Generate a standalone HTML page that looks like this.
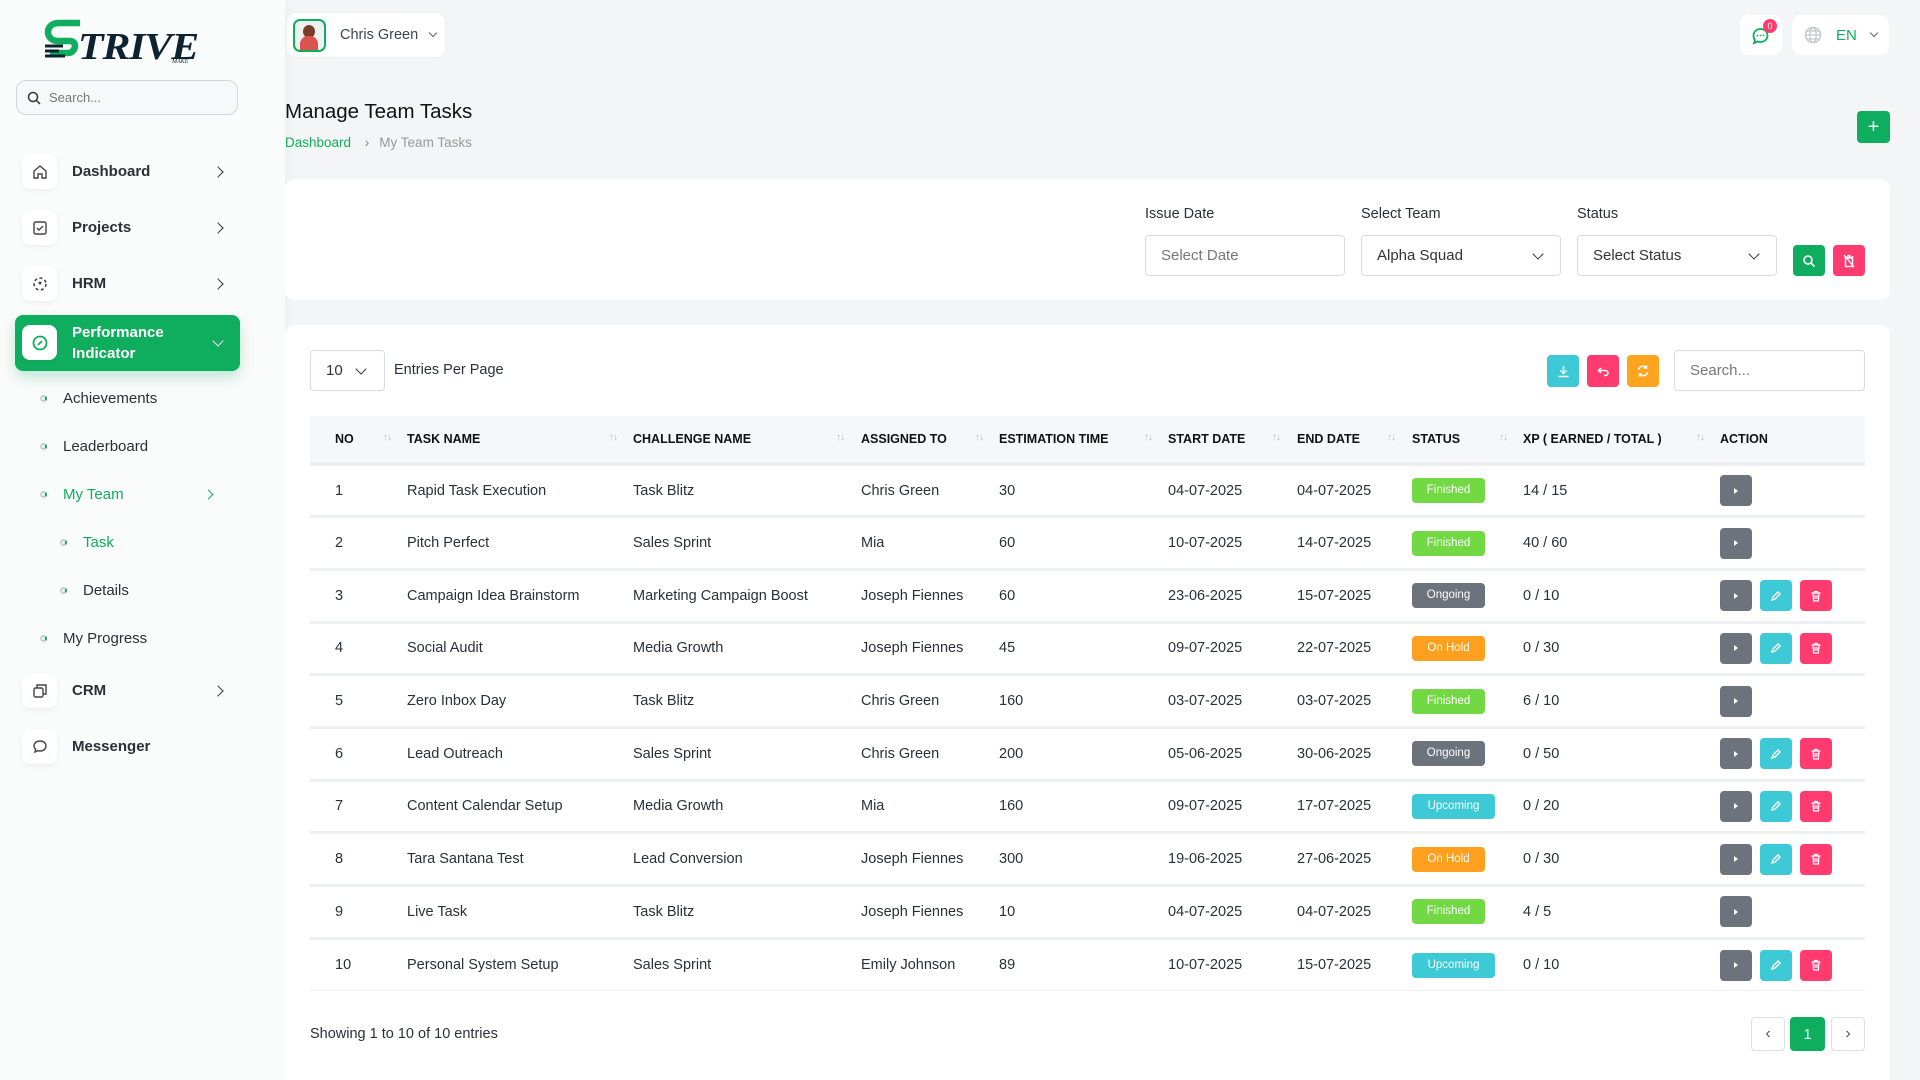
<!DOCTYPE html>
<html style="overflow:hidden;width:1920px;height:1080px"><head><meta charset="utf-8"><style>
*{box-sizing:border-box;margin:0;padding:0}
html,body{width:1920px;height:1080px;overflow:hidden}
body{background:#f3f5f6;font-family:"Liberation Sans",sans-serif;color:#2b2f36;position:relative}
.abs{position:absolute}
.side{left:0;top:0;width:285px;height:1080px;background:#fafbfb;box-shadow:2px 0 12px rgba(0,0,0,.03)}
.ib{width:35px;height:35px;background:#fff;border-radius:8px;box-shadow:0 2px 6px rgba(0,0,0,.05);display:flex;align-items:center;justify-content:center}
.nav{left:22px;width:210px;height:35px;display:flex;align-items:center;font-size:15px;font-weight:bold;color:#2b2f36}
.nav .t{margin-left:15px;flex:1}
.chev{width:8px;height:8px;border-right:1.8px solid #333;border-top:1.8px solid #333;transform:rotate(45deg);margin-right:10px}
.sub{font-size:15px;color:#2b2f36;display:flex;align-items:center}
.dot{width:7px;height:7px;border-radius:50%;border:2px solid #c9ced6;border-right-color:#0fae5e;margin-right:16px}
.card{background:#fff;border-radius:10px}
.inp{height:41px;border:1px solid #d8dce2;border-radius:4px;background:#fff;font-size:15px;display:flex;align-items:center;padding-left:15px;color:#333}
.btn{border-radius:4px;display:flex;align-items:center;justify-content:center}
table{border-collapse:collapse;position:absolute;left:310px;top:416px;width:1555px;font-size:14.5px}
th{height:48px;background:#f6f7fb;text-align:left;font-size:12.5px;font-weight:bold;color:#111;border-bottom:4px solid #eceef1;position:relative}
td{height:52.7px;border-bottom:3px solid #eeeff1;color:#2b2f36}
.s{position:absolute;top:16px;font-size:10px;color:#b8bcc3;letter-spacing:-1px}
.bd{display:inline-block;height:25px;line-height:25px;border-radius:4px;color:#fff;font-size:11.5px;text-align:center;width:73px}
.f{background:#72d945}.o{background:#6c737d}.h{background:#fd9f1f}.u{background:#3ec9d6;width:83px}
.ac{display:inline-flex;width:32px;height:31px;border-radius:4px;align-items:center;justify-content:center;margin-right:8px;vertical-align:middle}
.g{background:#6c737d}.c{background:#3ec9d6}.p{background:#ff3b6f}
</style></head><body>
<div class="abs side"></div>
<div class="abs" style="left:44px;top:18px;width:160px;height:46px">
<svg width="160" height="46" viewBox="0 0 160 46"><path d="M36 5H15C7 5 4 10 4 14c0 5 4 9 10 9h12c4 0 5 3 5 5s-2 7-7 7H6" fill="none" stroke="#0fae5e" stroke-width="6.5"/><path d="M1 28h18M1 33h14M1 38h20" stroke="#0d2430" stroke-width="3"/><text x="34" y="41" font-family="Liberation Serif" font-weight="bold" font-style="italic" font-size="38" fill="#0d2430" letter-spacing="-1" textLength="120" lengthAdjust="spacingAndGlyphs">TRIVE</text><text x="128" y="45" font-size="6" font-style="italic" fill="#0d2430" font-family="Liberation Serif">MAKE</text></svg></div>
<div class="abs" style="left:16px;top:80px;width:222px;height:35px;border:1px solid #d3d7dd;border-radius:10px;background:#f7f8f9;display:flex;align-items:center;padding-left:10px;font-size:13px;color:#777">
<svg width="14" height="14" viewBox="0 0 14 14"><circle cx="6" cy="6" r="4.5" fill="none" stroke="#333" stroke-width="1.5"/><path d="M9.5 9.5L13 13" stroke="#333" stroke-width="1.5"/></svg><span style="margin-left:8px">Search...</span></div>

<div class="abs nav" style="top:154px"><div class="ib"><svg width="16" height="16" viewBox="0 0 16 16"><path d="M2 7L8 2l6 5v7H10V10H6v4H2z" fill="none" stroke="#444" stroke-width="1.4"/></svg></div><span class="t">Dashboard</span><div class="chev"></div></div>
<div class="abs nav" style="top:210px"><div class="ib"><svg width="16" height="16" viewBox="0 0 16 16"><rect x="2" y="2" width="12" height="12" rx="1.5" fill="none" stroke="#444" stroke-width="1.4"/><path d="M5 8l2 2 4-4" fill="none" stroke="#444" stroke-width="1.4"/></svg></div><span class="t">Projects</span><div class="chev"></div></div>
<div class="abs nav" style="top:266px"><div class="ib"><svg width="16" height="16" viewBox="0 0 16 16"><circle cx="8" cy="8" r="6" fill="none" stroke="#444" stroke-width="1.6" stroke-dasharray="3 2.5"/><circle cx="8" cy="7" r="1.5" fill="#444"/></svg></div><span class="t">HRM</span><div class="chev"></div></div>
<div class="abs" style="left:15px;top:315px;width:225px;height:56px;background:#0fae5e;border-radius:8px;box-shadow:0 6px 14px rgba(15,174,94,.25)"></div>
<div class="abs nav" style="top:325px;color:#fff"><div class="ib"><svg width="18" height="18" viewBox="0 0 18 18"><circle cx="9" cy="9" r="6.5" fill="none" stroke="#0fae5e" stroke-width="1.8"/><path d="M7 11l4-4" stroke="#0fae5e" stroke-width="1.8"/></svg></div><span class="t" style="line-height:21px">Performance<br>Indicator</span><div class="chev" style="border-color:#fff;transform:rotate(135deg);margin-top:-4px"></div></div>
<div class="abs sub" style="left:40px;top:390px"><span class="dot"></span>Achievements</div>
<div class="abs sub" style="left:40px;top:438px"><span class="dot"></span>Leaderboard</div>
<div class="abs sub" style="left:40px;top:486px;color:#0fae5e;width:182px"><span class="dot"></span>My Team<span style="flex:1"></span><span class="chev" style="border-color:#0fae5e;width:7px;height:7px"></span></div>
<div class="abs sub" style="left:60px;top:534px;color:#0fae5e"><span class="dot"></span>Task</div>
<div class="abs sub" style="left:60px;top:582px"><span class="dot"></span>Details</div>
<div class="abs sub" style="left:40px;top:630px"><span class="dot"></span>My Progress</div>
<div class="abs nav" style="top:673px"><div class="ib"><svg width="16" height="16" viewBox="0 0 16 16"><rect x="2" y="5" width="9" height="9" rx="1.5" fill="none" stroke="#444" stroke-width="1.4"/><path d="M5 5V2h9v9h-3" fill="none" stroke="#444" stroke-width="1.4"/></svg></div><span class="t">CRM</span><div class="chev"></div></div>
<div class="abs nav" style="top:729px"><div class="ib"><svg width="16" height="16" viewBox="0 0 16 16"><path d="M8 2c3.5 0 6 2.2 6 5s-2.5 5-6 5c-.8 0-1.5-.1-2.2-.3L3 13l.7-2.6C2.6 9.5 2 8.3 2 7c0-2.8 2.5-5 6-5z" fill="none" stroke="#444" stroke-width="1.4"/></svg></div><span class="t">Messenger</span></div>

<div class="abs" style="left:286px;top:12px;width:160px;height:46px;background:#fff;border:1px solid #eef0f2;border-radius:10px;display:flex;align-items:center;padding-left:6px">
<div style="width:33px;height:33px;border:2.5px solid #0fae5e;border-radius:7px;background:#eef0f2;overflow:hidden;position:relative"><div style="position:absolute;left:8px;top:4px;width:12px;height:13px;border-radius:50%;background:#7a3b2a"></div><div style="position:absolute;left:5px;top:15px;width:18px;height:16px;border-radius:8px 8px 0 0;background:#d9534f"></div></div>
<span style="margin-left:14px;font-size:14.5px;color:#3b4452">Chris Green</span><span style="margin-left:12px;width:6px;height:6px;border-right:1.3px solid #666;border-bottom:1.3px solid #666;transform:rotate(45deg);margin-top:-4px"></span></div>
<div class="abs" style="left:1740px;top:15px;width:42px;height:40px;background:#fff;border-radius:9px"><svg style="position:absolute;left:11px;top:12px" width="19" height="19" viewBox="0 0 19 19"><path d="M9.5 2c4 0 7 2.8 7 6.5S13.5 15 9.5 15c-1 0-2-.2-2.8-.5L3 16l1-3C3 11.8 2.5 10.2 2.5 8.5 2.5 4.8 5.5 2 9.5 2z" fill="none" stroke="#0fae5e" stroke-width="1.8"/><circle cx="6.5" cy="8.5" r=".9" fill="#0fae5e"/><circle cx="9.5" cy="8.5" r=".9" fill="#0fae5e"/><circle cx="12.5" cy="8.5" r=".9" fill="#0fae5e"/></svg><div style="position:absolute;left:23px;top:4px;width:14px;height:14px;border-radius:50%;background:#ff3b6f;color:#fff;font-size:9px;text-align:center;line-height:14px">0</div></div>
<div class="abs" style="left:1792px;top:15px;width:97px;height:40px;background:#fff;border-radius:9px;display:flex;align-items:center;padding-left:12px"><svg width="18" height="18" viewBox="0 0 18 18"><circle cx="9" cy="9" r="7.5" fill="none" stroke="#c5c8cc" stroke-width="1.5"/><ellipse cx="9" cy="9" rx="3.2" ry="7.5" fill="none" stroke="#c5c8cc" stroke-width="1.3"/><path d="M1.5 9h15M3 5h12M3 13h12" stroke="#c5c8cc" stroke-width="1.2"/></svg><span style="margin-left:14px;color:#0fae5e;font-size:15px">EN</span><span style="margin-left:14px;width:6px;height:6px;border-right:1.3px solid #666;border-bottom:1.3px solid #666;transform:rotate(45deg);margin-top:-4px"></span></div>

<div class="abs" style="left:285px;top:100px;font-size:20.5px;color:#111">Manage Team Tasks</div>
<div class="abs" style="left:285px;top:135px;font-size:13.5px;color:#0fae5e">Dashboard <span style="color:#888;margin:0 10px">›</span><span style="color:#999">My Team Tasks</span></div>
<div class="abs btn" style="left:1857px;top:111px;width:33px;height:32px;background:#0fae5e;color:#fff;font-size:20px">+</div>

<div class="abs card" style="left:285px;top:179px;width:1605px;height:121px"></div>
<div class="abs" style="left:1145px;top:206px;font-size:14.5px">Issue Date</div>
<div class="abs" style="left:1361px;top:206px;font-size:14.5px">Select Team</div>
<div class="abs" style="left:1577px;top:206px;font-size:14.5px">Status</div>
<div class="abs inp" style="left:1145px;top:235px;width:200px;color:#777">Select Date</div>
<div class="abs inp" style="left:1361px;top:235px;width:200px">Alpha Squad<span style="position:absolute;right:18px;top:14px;width:8px;height:8px;border-right:1.8px solid #333;border-bottom:1.8px solid #333;transform:rotate(45deg)"></span></div>
<div class="abs inp" style="left:1577px;top:235px;width:200px">Select Status<span style="position:absolute;right:18px;top:14px;width:8px;height:8px;border-right:1.8px solid #333;border-bottom:1.8px solid #333;transform:rotate(45deg)"></span></div>
<div class="abs btn" style="left:1793px;top:245px;width:32px;height:31px;background:#0fae5e"><svg width="14" height="14" viewBox="0 0 14 14"><circle cx="6" cy="6" r="4" fill="none" stroke="#fff" stroke-width="1.6"/><path d="M9 9l3.5 3.5" stroke="#fff" stroke-width="1.6"/></svg></div>
<div class="abs btn" style="left:1833px;top:245px;width:32px;height:31px;background:#ff3b6f"><svg width="14" height="14" viewBox="0 0 14 14"><rect x="3.5" y="4" width="7" height="8.5" fill="none" stroke="#fff" stroke-width="1.4"/><path d="M2.5 3h9M5.5 1.5h3M2 1l10 12" stroke="#fff" stroke-width="1.3"/></svg></div>

<div class="abs card" style="left:285px;top:325px;width:1605px;height:755px;border-radius:10px 10px 0 0"></div>
<div class="abs inp" style="left:310px;top:350px;width:75px;height:41px">10<span style="position:absolute;left:46px;top:14px;width:8px;height:8px;border-right:1.8px solid #333;border-bottom:1.8px solid #333;transform:rotate(45deg)"></span></div>
<div class="abs" style="left:394px;top:362px;font-size:14.5px">Entries Per Page</div>
<div class="abs btn" style="left:1547px;top:355px;width:32px;height:32px;background:#3ec9d6"><svg width="13" height="13" viewBox="0 0 13 13"><path d="M6.5 1v7M3.5 5.5l3 3 3-3M1.5 11.5h10" fill="none" stroke="#fff" stroke-width="1.5"/></svg></div>
<div class="abs btn" style="left:1587px;top:355px;width:32px;height:32px;background:#ff3b6f"><svg width="13" height="13" viewBox="0 0 13 13"><path d="M4 3L1.5 5.5 4 8M1.5 5.5h7a2.5 2.5 0 010 5H7" fill="none" stroke="#fff" stroke-width="1.5"/></svg></div>
<div class="abs btn" style="left:1627px;top:355px;width:32px;height:32px;background:#ffa41f"><svg width="14" height="14" viewBox="0 0 14 14"><path d="M2.5 6a4.5 4.5 0 018-2M11.5 8a4.5 4.5 0 01-8 2M10.5 1.5v2.5H8M3.5 12.5V10H6" fill="none" stroke="#fff" stroke-width="1.5"/></svg></div>
<div class="abs inp" style="left:1674px;top:350px;width:191px;color:#777">Search...</div>

<table>
<tr><th style="width:97px;padding-left:25px">NO<span class="s" style="left:73px">↑↓</span></th><th style="width:226px">TASK NAME<span class="s" style="left:202px">↑↓</span></th><th style="width:228px">CHALLENGE NAME<span class="s" style="left:203px">↑↓</span></th><th style="width:138px">ASSIGNED TO<span class="s" style="left:114px">↑↓</span></th><th style="width:169px">ESTIMATION TIME<span class="s" style="left:145px">↑↓</span></th><th style="width:129px">START DATE<span class="s" style="left:104px">↑↓</span></th><th style="width:115px">END DATE<span class="s" style="left:90px">↑↓</span></th><th style="width:111px">STATUS<span class="s" style="left:87px">↑↓</span></th><th style="width:197px">XP ( EARNED / TOTAL )<span class="s" style="left:173px">↑↓</span></th><th>ACTION</th></tr>
<tr><td style="padding-left:25px">1</td><td>Rapid Task Execution</td><td>Task Blitz</td><td>Chris Green</td><td>30</td><td>04-07-2025</td><td>04-07-2025</td><td><span class="bd f">Finished</span></td><td>14 / 15</td><td><span class="ac g"><svg width="8" height="8"><path d="M2 1l4 3-4 3z" fill="#fff"/></svg></span></td></tr>
<tr><td style="padding-left:25px">2</td><td>Pitch Perfect</td><td>Sales Sprint</td><td>Mia</td><td>60</td><td>10-07-2025</td><td>14-07-2025</td><td><span class="bd f">Finished</span></td><td>40 / 60</td><td><span class="ac g"><svg width="8" height="8"><path d="M2 1l4 3-4 3z" fill="#fff"/></svg></span></td></tr>
<tr><td style="padding-left:25px">3</td><td>Campaign Idea Brainstorm</td><td>Marketing Campaign Boost</td><td>Joseph Fiennes</td><td>60</td><td>23-06-2025</td><td>15-07-2025</td><td><span class="bd o">Ongoing</span></td><td>0 / 10</td><td><span class="ac g"><svg width="8" height="8"><path d="M2 1l4 3-4 3z" fill="#fff"/></svg></span><span class="ac c"><svg width="12" height="12"><path d="M2 10l1-3 5-5 2 2-5 5z" fill="none" stroke="#fff" stroke-width="1.4"/></svg></span><span class="ac p"><svg width="12" height="12"><path d="M1.5 3h9M4.5 3V1.5h3V3M3 3l.6 8h4.8L9 3M5 5v4M7 5v4" fill="none" stroke="#fff" stroke-width="1.2"/></svg></span></td></tr>
<tr><td style="padding-left:25px">4</td><td>Social Audit</td><td>Media Growth</td><td>Joseph Fiennes</td><td>45</td><td>09-07-2025</td><td>22-07-2025</td><td><span class="bd h">On Hold</span></td><td>0 / 30</td><td><span class="ac g"><svg width="8" height="8"><path d="M2 1l4 3-4 3z" fill="#fff"/></svg></span><span class="ac c"><svg width="12" height="12"><path d="M2 10l1-3 5-5 2 2-5 5z" fill="none" stroke="#fff" stroke-width="1.4"/></svg></span><span class="ac p"><svg width="12" height="12"><path d="M1.5 3h9M4.5 3V1.5h3V3M3 3l.6 8h4.8L9 3M5 5v4M7 5v4" fill="none" stroke="#fff" stroke-width="1.2"/></svg></span></td></tr>
<tr><td style="padding-left:25px">5</td><td>Zero Inbox Day</td><td>Task Blitz</td><td>Chris Green</td><td>160</td><td>03-07-2025</td><td>03-07-2025</td><td><span class="bd f">Finished</span></td><td>6 / 10</td><td><span class="ac g"><svg width="8" height="8"><path d="M2 1l4 3-4 3z" fill="#fff"/></svg></span></td></tr>
<tr><td style="padding-left:25px">6</td><td>Lead Outreach</td><td>Sales Sprint</td><td>Chris Green</td><td>200</td><td>05-06-2025</td><td>30-06-2025</td><td><span class="bd o">Ongoing</span></td><td>0 / 50</td><td><span class="ac g"><svg width="8" height="8"><path d="M2 1l4 3-4 3z" fill="#fff"/></svg></span><span class="ac c"><svg width="12" height="12"><path d="M2 10l1-3 5-5 2 2-5 5z" fill="none" stroke="#fff" stroke-width="1.4"/></svg></span><span class="ac p"><svg width="12" height="12"><path d="M1.5 3h9M4.5 3V1.5h3V3M3 3l.6 8h4.8L9 3M5 5v4M7 5v4" fill="none" stroke="#fff" stroke-width="1.2"/></svg></span></td></tr>
<tr><td style="padding-left:25px">7</td><td>Content Calendar Setup</td><td>Media Growth</td><td>Mia</td><td>160</td><td>09-07-2025</td><td>17-07-2025</td><td><span class="bd u">Upcoming</span></td><td>0 / 20</td><td><span class="ac g"><svg width="8" height="8"><path d="M2 1l4 3-4 3z" fill="#fff"/></svg></span><span class="ac c"><svg width="12" height="12"><path d="M2 10l1-3 5-5 2 2-5 5z" fill="none" stroke="#fff" stroke-width="1.4"/></svg></span><span class="ac p"><svg width="12" height="12"><path d="M1.5 3h9M4.5 3V1.5h3V3M3 3l.6 8h4.8L9 3M5 5v4M7 5v4" fill="none" stroke="#fff" stroke-width="1.2"/></svg></span></td></tr>
<tr><td style="padding-left:25px">8</td><td>Tara Santana Test</td><td>Lead Conversion</td><td>Joseph Fiennes</td><td>300</td><td>19-06-2025</td><td>27-06-2025</td><td><span class="bd h">On Hold</span></td><td>0 / 30</td><td><span class="ac g"><svg width="8" height="8"><path d="M2 1l4 3-4 3z" fill="#fff"/></svg></span><span class="ac c"><svg width="12" height="12"><path d="M2 10l1-3 5-5 2 2-5 5z" fill="none" stroke="#fff" stroke-width="1.4"/></svg></span><span class="ac p"><svg width="12" height="12"><path d="M1.5 3h9M4.5 3V1.5h3V3M3 3l.6 8h4.8L9 3M5 5v4M7 5v4" fill="none" stroke="#fff" stroke-width="1.2"/></svg></span></td></tr>
<tr><td style="padding-left:25px">9</td><td>Live Task</td><td>Task Blitz</td><td>Joseph Fiennes</td><td>10</td><td>04-07-2025</td><td>04-07-2025</td><td><span class="bd f">Finished</span></td><td>4 / 5</td><td><span class="ac g"><svg width="8" height="8"><path d="M2 1l4 3-4 3z" fill="#fff"/></svg></span></td></tr>
<tr><td style="padding-left:25px;border-bottom-width:1px">10</td><td style="border-bottom-width:1px">Personal System Setup</td><td style="border-bottom-width:1px">Sales Sprint</td><td style="border-bottom-width:1px">Emily Johnson</td><td style="border-bottom-width:1px">89</td><td style="border-bottom-width:1px">10-07-2025</td><td style="border-bottom-width:1px">15-07-2025</td><td style="border-bottom-width:1px"><span class="bd u">Upcoming</span></td><td style="border-bottom-width:1px">0 / 10</td><td style="border-bottom-width:1px"><span class="ac g"><svg width="8" height="8"><path d="M2 1l4 3-4 3z" fill="#fff"/></svg></span><span class="ac c"><svg width="12" height="12"><path d="M2 10l1-3 5-5 2 2-5 5z" fill="none" stroke="#fff" stroke-width="1.4"/></svg></span><span class="ac p"><svg width="12" height="12"><path d="M1.5 3h9M4.5 3V1.5h3V3M3 3l.6 8h4.8L9 3M5 5v4M7 5v4" fill="none" stroke="#fff" stroke-width="1.2"/></svg></span></td></tr>
</table>

<div class="abs" style="left:310px;top:1026px;font-size:14.5px">Showing 1 to 10 of 10 entries</div>
<div class="abs btn" style="left:1751px;top:1017px;width:34px;height:34px;border:1px solid #dde0e4;background:#fff;color:#555;font-size:16px">‹</div>
<div class="abs btn" style="left:1790px;top:1017px;width:35px;height:34px;background:#0fae5e;color:#dff;font-size:15px">1</div>
<div class="abs btn" style="left:1831px;top:1017px;width:34px;height:34px;border:1px solid #dde0e4;background:#fff;color:#555;font-size:16px">›</div>
</body></html>
